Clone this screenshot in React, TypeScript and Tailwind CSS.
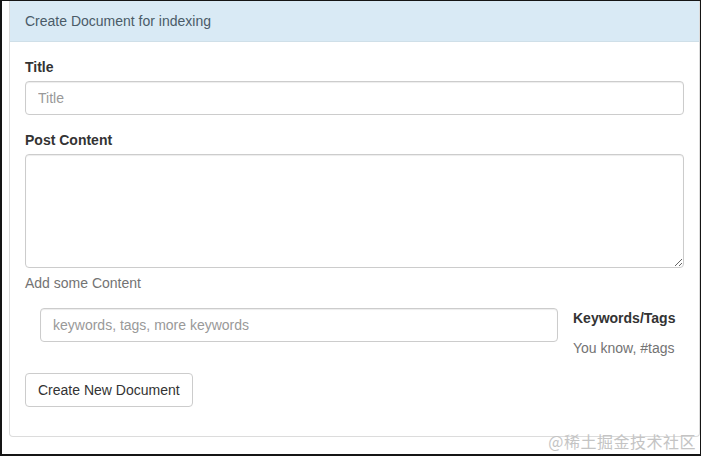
import React from "react";

const font = { fontFamily: '"Liberation Sans", Arial, "Noto Sans CJK SC", sans-serif' };

export default function App() {
    return (
        <div
            className="relative w-[701px] h-[456px] bg-white border-l-2 border-t border-r border-b-2 border-[#151515] text-[14px] text-[#333] leading-5 overflow-hidden"
            style={font}
        >
            {/* panel */}
            <div className="ml-[7px] mr-0 rounded-b-[4px] border border-t-0 border-[#dcdcdc] bg-white">
                <div className="h-[41px] px-[15px] py-[10px] bg-[#d9eaf5] border-b border-[#cfdfe8] text-[#4a5b68]">
                    Create Document for indexing
                </div>
                <div className="px-[15px] pt-[15px] pb-[29px]">
                    <div className="mb-[15px]">
                        <label className="block font-bold mb-[4px]">Title</label>
                        <input
                            type="text"
                            placeholder="Title"
                            className="block w-full h-[34px] px-3 rounded-[4px] border border-[#ccc] shadow-[inset_0_1px_1px_rgba(0,0,0,0.075)] placeholder-[#999] outline-none"
                        />
                    </div>
                    <div className="mb-[15px]">
                        <label className="block font-bold mb-[4px]">Post Content</label>
                        <textarea
                            className="block w-full h-[114px] px-3 py-1.5 rounded-[4px] border border-[#ccc] shadow-[inset_0_1px_1px_rgba(0,0,0,0.075)] outline-none"
                        />
                        <p className="mt-[5px] text-[#737373]">Add some Content</p>
                    </div>
                    <div className="flex mb-[15px]">
                        <input
                            type="text"
                            placeholder="keywords, tags, more keywords"
                            className="ml-[15px] w-[518px] h-[34px] px-3 rounded-[4px] border border-[#ccc] shadow-[inset_0_1px_1px_rgba(0,0,0,0.075)] placeholder-[#999] outline-none"
                        />
                        <div className="ml-[15px]">
                            <div className="font-bold">Keywords/Tags</div>
                            <div className="mt-[10px] text-[#737373]">You know, #tags</div>
                        </div>
                    </div>
                    <button className="h-[34px] px-3 rounded-[4px] border border-[#ccc] bg-white text-[#333]">
                        Create New Document
                    </button>
                </div>
            </div>
            {/* watermark */}
            <div
                className="absolute right-[4px] bottom-[3px] text-[16px] text-[#c4c4c4] tracking-[0.5px]"
                style={{ fontFamily: '"Noto Sans CJK SC", sans-serif' }}
            >
                @稀土掘金技术社区
            </div>
        </div>
    );
}
